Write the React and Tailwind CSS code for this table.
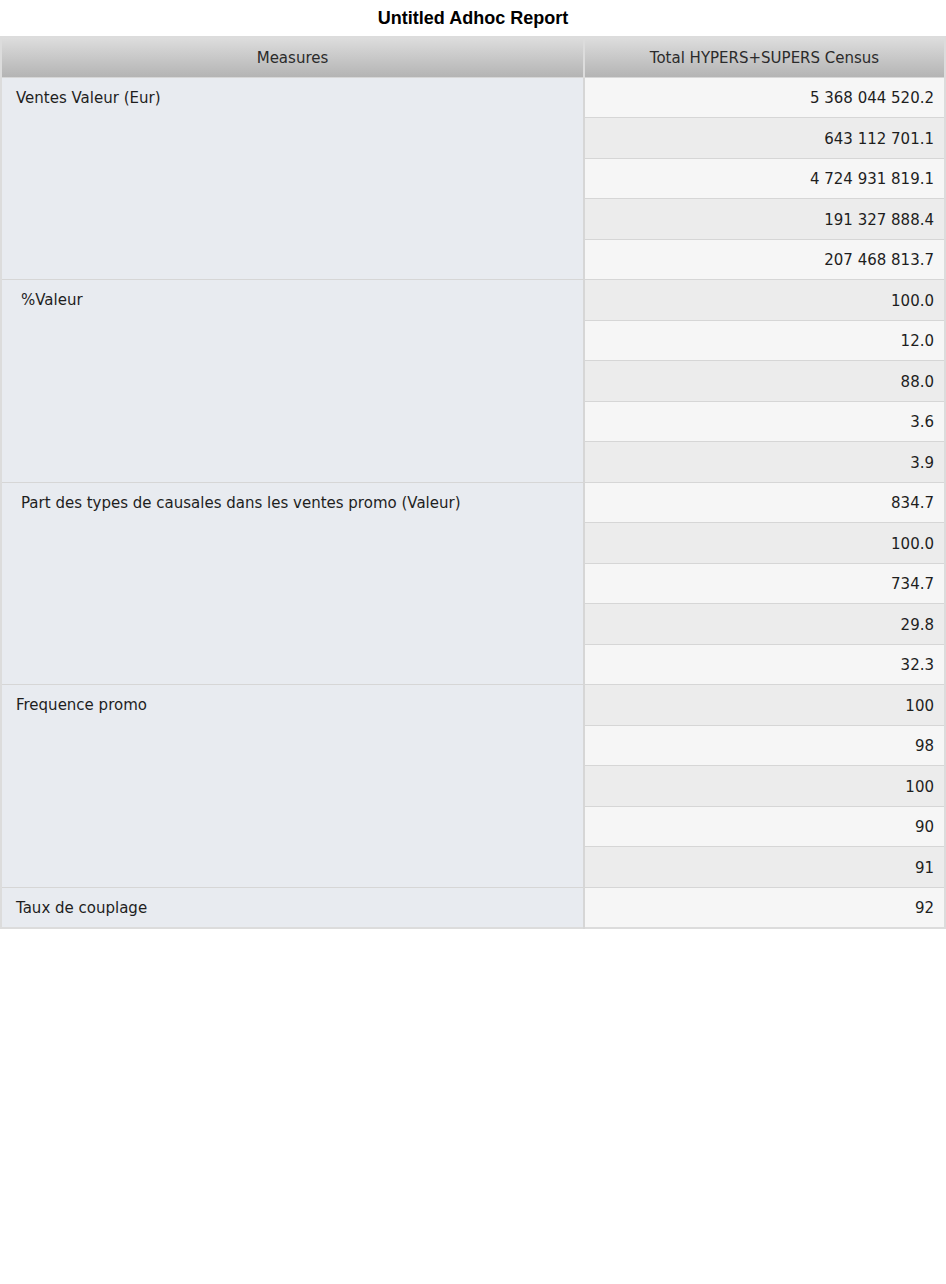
import React from 'react';

const groups = [
  { label: 'Ventes Valeur (Eur)', indent: false, values: ['5 368 044 520.2', '643 112 701.1', '4 724 931 819.1', '191 327 888.4', '207 468 813.7'] },
  { label: '%Valeur', indent: true, values: ['100.0', '12.0', '88.0', '3.6', '3.9'] },
  { label: 'Part des types de causales dans les ventes promo (Valeur)', indent: true, values: ['834.7', '100.0', '734.7', '29.8', '32.3'] },
  { label: 'Frequence promo', indent: false, values: ['100', '98', '100', '90', '91'] },
  { label: 'Taux de couplage', indent: false, values: ['92'] },
];

const font = { fontFamily: '"DejaVu Sans", Verdana, sans-serif' };

export default function App() {
  let rowIndex = 0;

  return (
    <div className="w-[946px] bg-white">
      <h1 className="h-[36px] flex items-center justify-center text-[18px] font-bold text-black font-['Liberation_Sans',Arial,sans-serif]">
        Untitled Adhoc Report
      </h1>

      <table className="w-[946px] border-collapse border-2 border-[#dcdcdc] text-[15px] text-[#1e1e1e] table-fixed" style={font}>
        <colgroup>
          <col className="w-[583px]" />
          <col />
        </colgroup>
        <thead>
          <tr className="h-[40px] bg-gradient-to-b from-[#dedede] to-[#b4b4b4] text-[#2b2b2b]">
            <th className="font-normal pt-[2px] border-r-2 border-[#dcdcdc]">Measures</th>
            <th className="font-normal pt-[2px]">Total HYPERS+SUPERS Census</th>
          </tr>
        </thead>
        <tbody>
          {groups.map((g) =>
            g.values.map((v, i) => {
              const light = rowIndex % 2 === 0;
              rowIndex += 1;
              return (
                <tr key={g.label + i} className="h-[40.5px]">
                  {i === 0 && (
                    <td
                      rowSpan={g.values.length}
                      className={`align-top bg-[#e8ebf0] border-t border-r-2 border-[#d6d6d6] pt-[9px] ${g.indent ? 'pl-[19px]' : 'pl-[14px]'}`}
                    >
                      {g.label}
                    </td>
                  )}
                  <td className={`text-right pr-[10px] pt-[2px] border-t border-[#d6d6d6] ${light ? 'bg-[#f6f6f6]' : 'bg-[#ececec]'}`}>
                    {v}
                  </td>
                </tr>
              );
            })
          )}
        </tbody>
      </table>
    </div>
  );
}
